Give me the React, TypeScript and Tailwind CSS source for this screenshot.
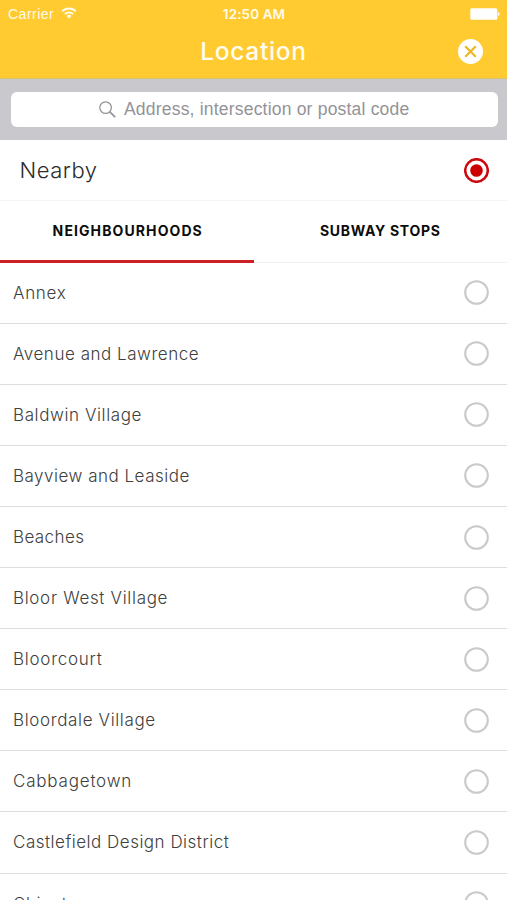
const neighbourhoods = [
  { name: "Annex", tracking: "tracking-[0.7px]" },
  { name: "Avenue and Lawrence", tracking: "tracking-[0.53px]" },
  { name: "Baldwin Village", tracking: "tracking-[0.6px]" },
  { name: "Bayview and Leaside", tracking: "tracking-[0.5px]" },
  { name: "Beaches", tracking: "tracking-[0.4px]" },
  { name: "Bloor West Village", tracking: "tracking-[0.68px]" },
  { name: "Bloorcourt", tracking: "tracking-[0.75px]" },
  { name: "Bloordale Village", tracking: "tracking-[0.64px]" },
  { name: "Cabbagetown", tracking: "tracking-[0.8px]" },
  { name: "Castlefield Design District", tracking: "tracking-[0.5px]" },
  { name: "Chinatown", tracking: "tracking-[0.6px]" },
];

function StatusBar() {
  return (
    <div className="grid h-7 grid-cols-3 items-center pl-2 pr-[7px] text-[#fffbe8]">
      <div className="flex items-center gap-[7px]">
        <span className="font-['Liberation_Sans',Arial,sans-serif] text-[14px] leading-none tracking-[0.5px]">Carrier</span>
        <svg className="-mt-[2px] h-3 w-4" viewBox="0 0 16 12" fill="none" stroke="currentColor" strokeWidth="2">
          <path d="M1.1 4.4a9.8 9.8 0 0 1 13.8 0" />
          <path d="M3.8 7.1a6 6 0 0 1 8.4 0" />
          <path d="M8 11.6 5.5 9.1a3.5 3.5 0 0 1 5 0z" fill="currentColor" stroke="none" />
        </svg>
      </div>
      <span className="pt-px text-center text-[13.5px] font-semibold leading-none tracking-[0.1px]">12:50 AM</span>
      <svg className="h-3 w-[30px] justify-self-end" viewBox="0 0 30 12" fill="white">
        <rect x="0.3" y="0.3" width="27" height="11.4" rx="1.5" />
        <path d="M28 4.2c1 .2 1.6.9 1.6 1.8S29 7.6 28 7.8z" />
      </svg>
    </div>
  );
}

function Radio({ selected = false }: { selected?: boolean }) {
  return (
    <svg className="size-[25px]" viewBox="0 0 25 25" fill="none">
      <circle cx="12.5" cy="12.5" r="11.3" stroke={selected ? "#cc0a10" : "#cacaca"} strokeWidth={selected ? 2.5 : 2.1} />
      {selected && <circle cx="12.5" cy="12.5" r="6.3" fill="#cc0000" />}
    </svg>
  );
}

export default function App() {
  return (
    <div className="h-[900px] w-full overflow-hidden bg-white font-['Inter','Liberation_Sans',sans-serif]">
      <header className="h-[79px] border-b border-[#d9bf6e] bg-[#ffcb31]">
        <StatusBar />
        <div className="grid h-[46px] grid-cols-[1fr_auto_1fr] items-center pr-6">
          <span />
          <h1 className="pl-6 pt-px text-[24.5px] font-medium leading-none tracking-[0.7px] text-[#fffdf0]">Location</h1>
          <button className="flex size-[25px] items-center justify-center justify-self-end rounded-full bg-white" aria-label="Close">
            <svg className="size-[13px]" viewBox="0 0 13 13" stroke="#ecb824" strokeWidth="2.3">
              <path d="M1.2 1.2 11.8 11.8M11.8 1.2 1.2 11.8" />
            </svg>
          </button>
        </div>
      </header>

      <div className="h-[61px] bg-[#c9c8cd] pl-[10.5px] pr-[9.5px] pt-[13px]">
        <div className="flex h-[34.5px] items-center rounded-[6px] bg-white pl-[88px]">
          <svg className="h-[17px] w-[17px]" viewBox="0 0 17 17" fill="none" stroke="#96969b">
            <circle cx="6.6" cy="6.6" r="5.8" strokeWidth="1.3" />
            <path d="m10.8 10.8 5.4 5.4" strokeWidth="1.8" />
          </svg>
          <span className="ml-[8.5px] whitespace-nowrap pt-px font-['Liberation_Sans',Arial,sans-serif] text-[17.5px] leading-none tracking-[0.2px] text-[#939398]">
            Address, intersection or postal code
          </span>
        </div>
      </div>

      <div className="flex h-[61px] items-center justify-between border-b border-[#f4f4f4] pl-[19.5px] pr-[18px]">
        <span className="text-[22px] font-light leading-none tracking-[0.5px] text-[#2b2b2b]">Nearby</span>
        <Radio selected />
      </div>

      <div className="grid h-[61.6px] grid-cols-2 text-[14px] font-bold leading-none text-[#0c0c0c]">
        <div className="flex items-center justify-center border-b-[3px] border-[#cc2027] pl-[2px] pt-px tracking-[1.1px]">NEIGHBOURHOODS</div>
        <div className="flex items-center justify-center border-b border-[#f2f2f2] tracking-[0.7px]">SUBWAY STOPS</div>
      </div>

      <ul>
        {neighbourhoods.map(({ name, tracking }) => (
          <li key={name} className="flex h-[61.1px] items-center justify-between border-b border-[#dedede] pl-[13px] pr-[18px]">
            <span className={`pt-px text-[17px] font-light leading-none text-[#404040] ${tracking}`}>{name}</span>
            <Radio />
          </li>
        ))}
      </ul>
    </div>
  );
}
